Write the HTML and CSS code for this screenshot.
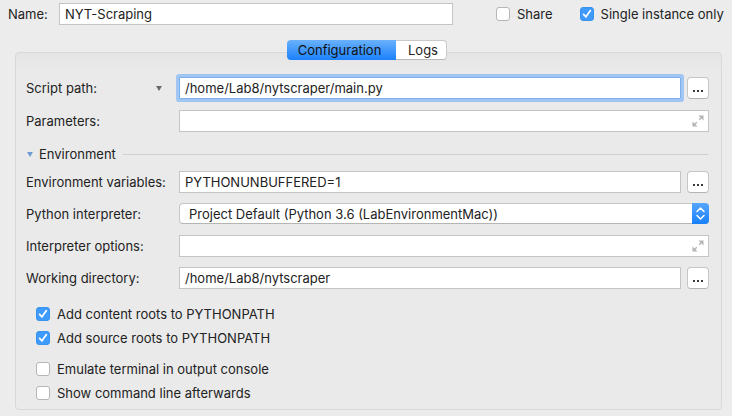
FILE: index.html
```html
<!DOCTYPE html>
<html>
<head>
<meta charset="utf-8">
<link rel="stylesheet" href="styles.css">
</head>
<body>
<div class="top">
  <div class="name-label">Name:</div>
  <div class="input name-input">NYT-Scraping</div>
  <div class="check-item share"><span class="cb"></span><span>Share</span></div>
  <div class="check-item single"><span class="cb checked"><svg width="12" height="12" viewBox="0 0 12 12"><path d="M2.6 6.4 L5 8.8 L9.4 2.6" fill="none" stroke="#fff" stroke-width="1.7" stroke-linecap="round" stroke-linejoin="round"/></svg></span><span>Single instance only</span></div>
</div>

<div class="tabs">
  <div class="tab tab-active">Configuration</div>
  <div class="tab tab-logs">Logs</div>
</div>

<div class="panel">
  <div class="row">
    <div class="label">Script path:<span class="tri"></span></div>
    <div class="input field focus">/home/Lab8/nytscraper/main.py</div>
    <div class="dots-btn"><i></i><i></i><i></i></div>
  </div>
  <div class="row">
    <div class="label">Parameters:</div>
    <div class="input field expand"><svg width="12" height="12" viewBox="0 0 12 12"><polygon points="6.5,0.5 11.5,0.5 11.5,5.5" fill="#b4b4b4"/><path d="M10.5 1.5 L7.2 4.8" stroke="#b4b4b4" stroke-width="1.4"/><polygon points="0.5,6.5 0.5,11.5 5.5,11.5" fill="#b4b4b4"/><path d="M1.5 10.5 L4.8 7.2" stroke="#b4b4b4" stroke-width="1.4"/></svg></div>
  </div>
  <div class="row env-head">
    <span class="env-tri"></span>
    <span class="env-text">Environment</span>
    <span class="env-line"></span>
  </div>
  <div class="row env-row">
    <div class="label">Environment variables:</div>
    <div class="input field">PYTHONUNBUFFERED=1</div>
    <div class="dots-btn"><i></i><i></i><i></i></div>
  </div>
  <div class="row env-row">
    <div class="label">Python interpreter:</div>
    <div class="select">
      <span class="select-text">Project Default (Python 3.6 (LabEnvironmentMac))</span>
      <span class="stepper"><svg width="17" height="21" viewBox="0 0 17 21"><path d="M5 8.5 L8.5 5 L12 8.5 M5 12.5 L8.5 16 L12 12.5" fill="none" stroke="#fff" stroke-width="1.5" stroke-linecap="round" stroke-linejoin="round"/></svg></span>
    </div>
  </div>
  <div class="row env-row">
    <div class="label">Interpreter options:</div>
    <div class="input field expand"><svg width="12" height="12" viewBox="0 0 12 12"><polygon points="6.5,0.5 11.5,0.5 11.5,5.5" fill="#b4b4b4"/><path d="M10.5 1.5 L7.2 4.8" stroke="#b4b4b4" stroke-width="1.4"/><polygon points="0.5,6.5 0.5,11.5 5.5,11.5" fill="#b4b4b4"/><path d="M1.5 10.5 L4.8 7.2" stroke="#b4b4b4" stroke-width="1.4"/></svg></div>
  </div>
  <div class="row env-row last">
    <div class="label">Working directory:</div>
    <div class="input field">/home/Lab8/nytscraper</div>
    <div class="dots-btn"><i></i><i></i><i></i></div>
  </div>

  <div class="checks">
    <div class="chk c1"><span class="cb checked"><svg width="12" height="12" viewBox="0 0 12 12"><path d="M2.6 6.4 L5 8.8 L9.4 2.6" fill="none" stroke="#fff" stroke-width="1.7" stroke-linecap="round" stroke-linejoin="round"/></svg></span><span>Add content roots to PYTHONPATH</span></div>
    <div class="chk c2"><span class="cb checked"><svg width="12" height="12" viewBox="0 0 12 12"><path d="M2.6 6.4 L5 8.8 L9.4 2.6" fill="none" stroke="#fff" stroke-width="1.7" stroke-linecap="round" stroke-linejoin="round"/></svg></span><span>Add source roots to PYTHONPATH</span></div>
    <div class="chk c3"><span class="cb"></span><span>Emulate terminal in output console</span></div>
    <div class="chk c4"><span class="cb"></span><span>Show command line afterwards</span></div>
  </div>
</div>
</body>
</html>
```

FILE: styles.css
```css
html, body {
  margin: 0;
  padding: 0;
}
body {
  width: 732px;
  height: 416px;
  overflow: hidden;
  background: #ececec;
  font-family: Inter, "Helvetica Neue", "Liberation Sans", sans-serif;
  font-size: 13px;
  color: #222;
}

.top {
  display: flex;
  align-items: center;
  padding: 3px 0 0 8px;
  height: 22px;
}
.name-label {
  width: 51px;
}
.input {
  box-sizing: border-box;
  height: 22px;
  background: #fff;
  border: 1px solid #c4c4c4;
  display: flex;
  align-items: center;
  padding-left: 5px;
  white-space: nowrap;
}
.name-input {
  width: 394px;
}
.check-item {
  display: flex;
  align-items: center;
  gap: 7px;
}
.share {
  margin-left: 43px;
}
.single {
  margin-left: 27px;
}
.cb {
  width: 14px;
  height: 14px;
  box-sizing: border-box;
  border: 1px solid #b6b6b6;
  border-radius: 3px;
  background: #fff;
  display: flex;
  align-items: center;
  justify-content: center;
  flex: none;
}
.cb.checked {
  background: #3e9bfc;
  border-color: #3a92ef;
}

.tabs {
  display: flex;
  justify-content: center;
  padding-left: 2px;
  margin-top: 15px;
  margin-bottom: -8px;
  position: relative;
  z-index: 1;
}
.tab {
  box-sizing: border-box;
  height: 20px;
  display: flex;
  align-items: center;
  justify-content: center;
}
.tab-active {
  width: 109px;
  background: linear-gradient(#6ab1fc, #1b81fb);
  border-radius: 4px 0 0 4px;
  color: #111;
  padding-right: 4px;
}
.tab-logs {
  width: 51px;
  background: #fff;
  border: 1px solid #c9c9c9;
  border-left: none;
  border-bottom-color: #b9b9b9;
  border-radius: 0 4px 4px 0;
  padding-left: 4px;
}

.panel {
  margin-left: 15px;
  width: 707px;
  height: 358px;
  box-sizing: border-box;
  border: 1px solid #d8d8d8;
  border-radius: 4px;
  background: linear-gradient(#e4e4e4, #eaeaea 16px, #eaeaea);
  padding: 24px 12px 0 10px;
}
.row {
  display: flex;
  align-items: center;
  height: 22px;
  margin-bottom: 11px;
}
.label {
  width: 153px;
  flex: none;
  display: flex;
  align-items: center;
  justify-content: space-between;
  white-space: nowrap;
}
.tri {
  width: 0;
  height: 0;
  border-left: 3.5px solid transparent;
  border-right: 3.5px solid transparent;
  border-top: 5px solid #6a6a6a;
  margin-right: 17px;
}
.field {
  flex: 1;
}
.focus {
  border-color: #7eb0ec;
  box-shadow: 0 0 0 3px #a0c7f4;
  border-radius: 1px;
}
.expand {
  justify-content: flex-end;
  padding-right: 4px;
}
.dots-btn {
  width: 22px;
  height: 22px;
  box-sizing: border-box;
  margin-left: 6px;
  flex: none;
  background: #fff;
  border: 1px solid #c6c6c6;
  border-bottom-color: #b3b3b3;
  border-radius: 4px;
  display: flex;
  align-items: flex-end;
  justify-content: center;
  gap: 2px;
  padding-bottom: 6px;
}
.dots-btn i {
  width: 2px;
  height: 2px;
  background: #3a3a3a;
}

.env-head {
  margin-bottom: 6px;
}
.env-tri {
  width: 0;
  height: 0;
  border-left: 3px solid transparent;
  border-right: 3px solid transparent;
  border-top: 5px solid #6d9bd3;
  margin-left: 1px;
  margin-right: 6px;
}
.env-text {
  white-space: nowrap;
}
.env-line {
  flex: 1;
  height: 1px;
  background: #cfcfcf;
  margin-left: 7px;
  margin-right: 1px;
}
.env-row {
  margin-bottom: 10px;
}
.env-row.last {
  margin-bottom: 16px;
}
.select {
  flex: 1;
  align-self: flex-start;
  height: 21px;
  box-sizing: border-box;
  background: #fff;
  border: 1px solid #c6c6c6;
  border-bottom-color: #b5b5b5;
  border-radius: 4px;
  display: flex;
  align-items: center;
  padding-left: 9px;
}
.select-text {
  flex: 1;
  white-space: nowrap;
}
.stepper {
  width: 17px;
  height: 21px;
  margin: -1px -1px -1px 0;
  background: linear-gradient(#56a6fc, #1a80fb);
  border-radius: 0 4px 4px 0;
  display: flex;
}

.checks {
  padding-left: 10px;
}
.chk {
  display: flex;
  align-items: center;
  gap: 7px;
  height: 18px;
  white-space: nowrap;
}
.c2 {
  margin-top: 6px;
}
.c3 {
  margin-top: 13px;
}
.c4 {
  margin-top: 6px;
}
```
